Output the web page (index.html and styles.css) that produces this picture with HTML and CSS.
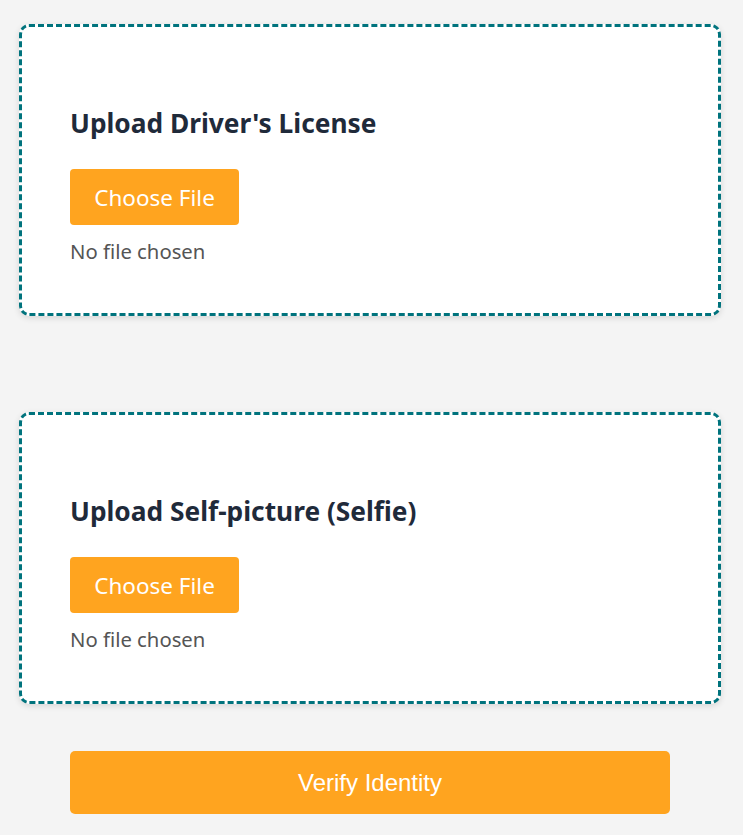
FILE: index.html
```html
<!DOCTYPE html>
<html lang="en">
<head>
<meta charset="utf-8">
<title>Verify Identity</title>
<link rel="stylesheet" href="styles.css">
</head>
<body>
<main class="page">
  <section class="upload-card">
    <h2 class="upload-title">Upload Driver's License</h2>
    <div class="file-field">
      <button class="choose-btn" type="button">Choose File</button>
      <span class="file-status">No file chosen</span>
    </div>
  </section>
  <section class="upload-card">
    <h2 class="upload-title">Upload Self-picture (Selfie)</h2>
    <div class="file-field">
      <button class="choose-btn" type="button">Choose File</button>
      <span class="file-status">No file chosen</span>
    </div>
  </section>
  <div class="actions">
    <button class="verify-btn" type="button">Verify Identity</button>
  </div>
</main>
</body>
</html>
```

FILE: styles.css
```css
html, body {
  margin: 0;
  padding: 0;
  background: #f4f4f4;
}

.page {
  display: flex;
  flex-direction: column;
  padding: 24px 22px 0 19px;
  font-family: "Noto Sans", "Open Sans", sans-serif;
}

.upload-card {
  background: #ffffff;
  border: 3px dashed #00737d;
  border-radius: 10px;
  box-shadow: 0 2px 6px rgba(0, 0, 0, 0.12);
  padding: 79px 48px 48px;
  height: 292px;
  box-sizing: border-box;
  margin-bottom: 96px;
}

.upload-card + .upload-card {
  margin-bottom: 47px;
}

.upload-title {
  margin: 0 0 29px;
  font-size: 26.3px;
  line-height: 34px;
  font-weight: 700;
  color: #1f2a3a;
}

.file-field {
  display: flex;
  flex-direction: column;
  align-items: flex-start;
  gap: 12px;
}

.choose-btn {
  background: #ffa41f;
  color: #ffffff;
  border: none;
  border-radius: 4px;
  width: 169px;
  height: 56px;
  font-family: "Noto Sans", "Open Sans", sans-serif;
  font-size: 22.5px;
  padding: 0;
}

.file-status {
  font-size: 20.3px;
  line-height: 28px;
  color: #555555;
}

.actions {
  padding: 0 51px;
}

.verify-btn {
  width: 600px;
  height: 63px;
  background: #ffa41f;
  color: #ffffff;
  border: none;
  border-radius: 5px;
  font-family: "Liberation Sans", Arial, sans-serif;
  font-size: 24px;
}
```
